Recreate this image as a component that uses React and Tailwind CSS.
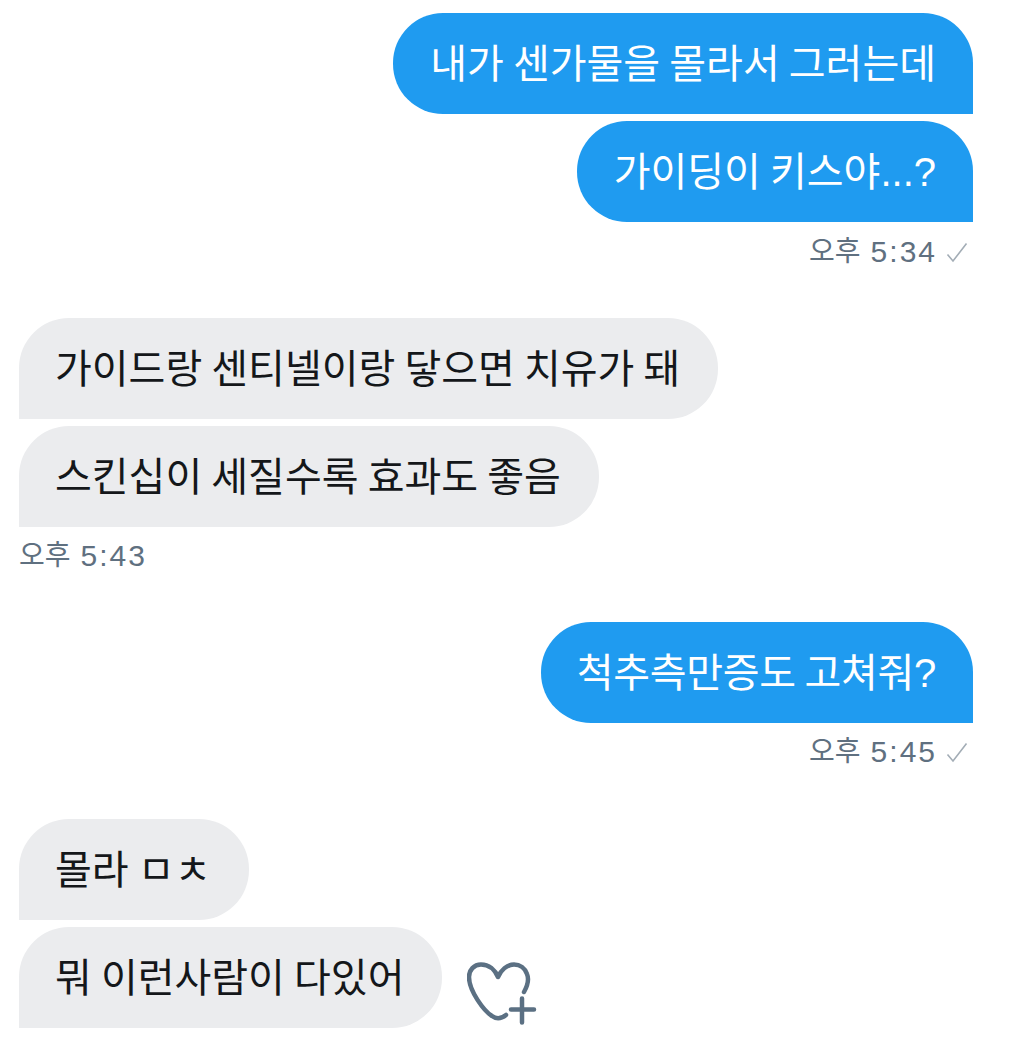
const font = "font-['Liberation_Sans','Noto_Sans_CJK_KR',sans-serif]";

function Sent({ children, className = "" }) {
  return (
    <div className={`h-[101px] flex items-center px-[37px] bg-[#1f9bf0] text-white text-[40px] leading-none [word-spacing:-2px] whitespace-nowrap rounded-t-[50px] rounded-bl-[50px] ${className}`}>
      {children}
    </div>
  );
}

function Received({ children }) {
  return (
    <div className="h-[101px] flex items-center pl-[36px] pr-[38px] bg-[#ebecee] text-[#14171a] text-[40px] leading-none [word-spacing:-2px] whitespace-nowrap rounded-t-[50px] rounded-br-[50px]">
      {children}
    </div>
  );
}

function Meta({ time, check }) {
  return (
    <div className="flex items-center h-[30px] text-[#5f7080]">
      <span className="text-[28px] leading-none">오후</span>
      <span className="ml-[10px] text-[30px] leading-none tracking-[2px]">{time}</span>
      {check && (
        <svg className="ml-[9px] mr-[5px]" width="22" height="21" viewBox="0 0 22 21" fill="none" stroke="#a3adb6" strokeWidth="1.6">
          <path d="M1.5 12.5 L7 19 L20.5 1.5" />
        </svg>
      )}
    </div>
  );
}

export default function App() {
  return (
    <div className={`w-[1021px] h-[1040px] bg-white overflow-hidden flex flex-col pl-[19px] pr-[48px] pt-[13px] ${font}`}>
      <div className="flex flex-col items-end gap-[7px]">
        <Sent>내가 센가물을 몰라서 그러는데</Sent>
        <Sent>가이딩이 키스야...?</Sent>
      </div>
      <div className="flex justify-end mt-[15px]">
        <Meta time="5:34" check />
      </div>

      <div className="flex flex-col items-start gap-[7px] mt-[51px]">
        <Received>가이드랑 센티넬이랑 닿으면 치유가 돼</Received>
        <Received>스킨십이 세질수록 효과도 좋음</Received>
      </div>
      <div className="flex mt-[14px]">
        <Meta time="5:43" />
      </div>

      <div className="flex flex-col items-end mt-[51px]">
        <Sent className="pl-[36px] tracking-[-0.3px]">척추측만증도 고쳐줘?</Sent>
      </div>
      <div className="flex justify-end mt-[14px]">
        <Meta time="5:45" check />
      </div>

      <div className="flex flex-col items-start gap-[7px] mt-[52px]">
        <Received>몰라 ㅁㅊ</Received>
        <div className="flex items-center gap-[25px]">
          <Received>뭐 이런사람이 다있어</Received>
          <svg className="mt-[30px]" width="70" height="64" viewBox="0 0 70 64" fill="none" stroke="#5b7083" strokeWidth="4.5" strokeLinecap="round" strokeLinejoin="round">
            <path d="M57 31 C61 24 62 18 60 13 C58 7 53 3.5 47 3.5 C40 3.5 34 9 31 16 C28 9 22 3.5 14 3.5 C7 3.5 2 9 2 16 C2 30 17 50 25 55 C29 58 34 58 39 54" />
            <path d="M44 48.5 H67 M55 37.5 V61.5" />
          </svg>
        </div>
      </div>
    </div>
  );
}
